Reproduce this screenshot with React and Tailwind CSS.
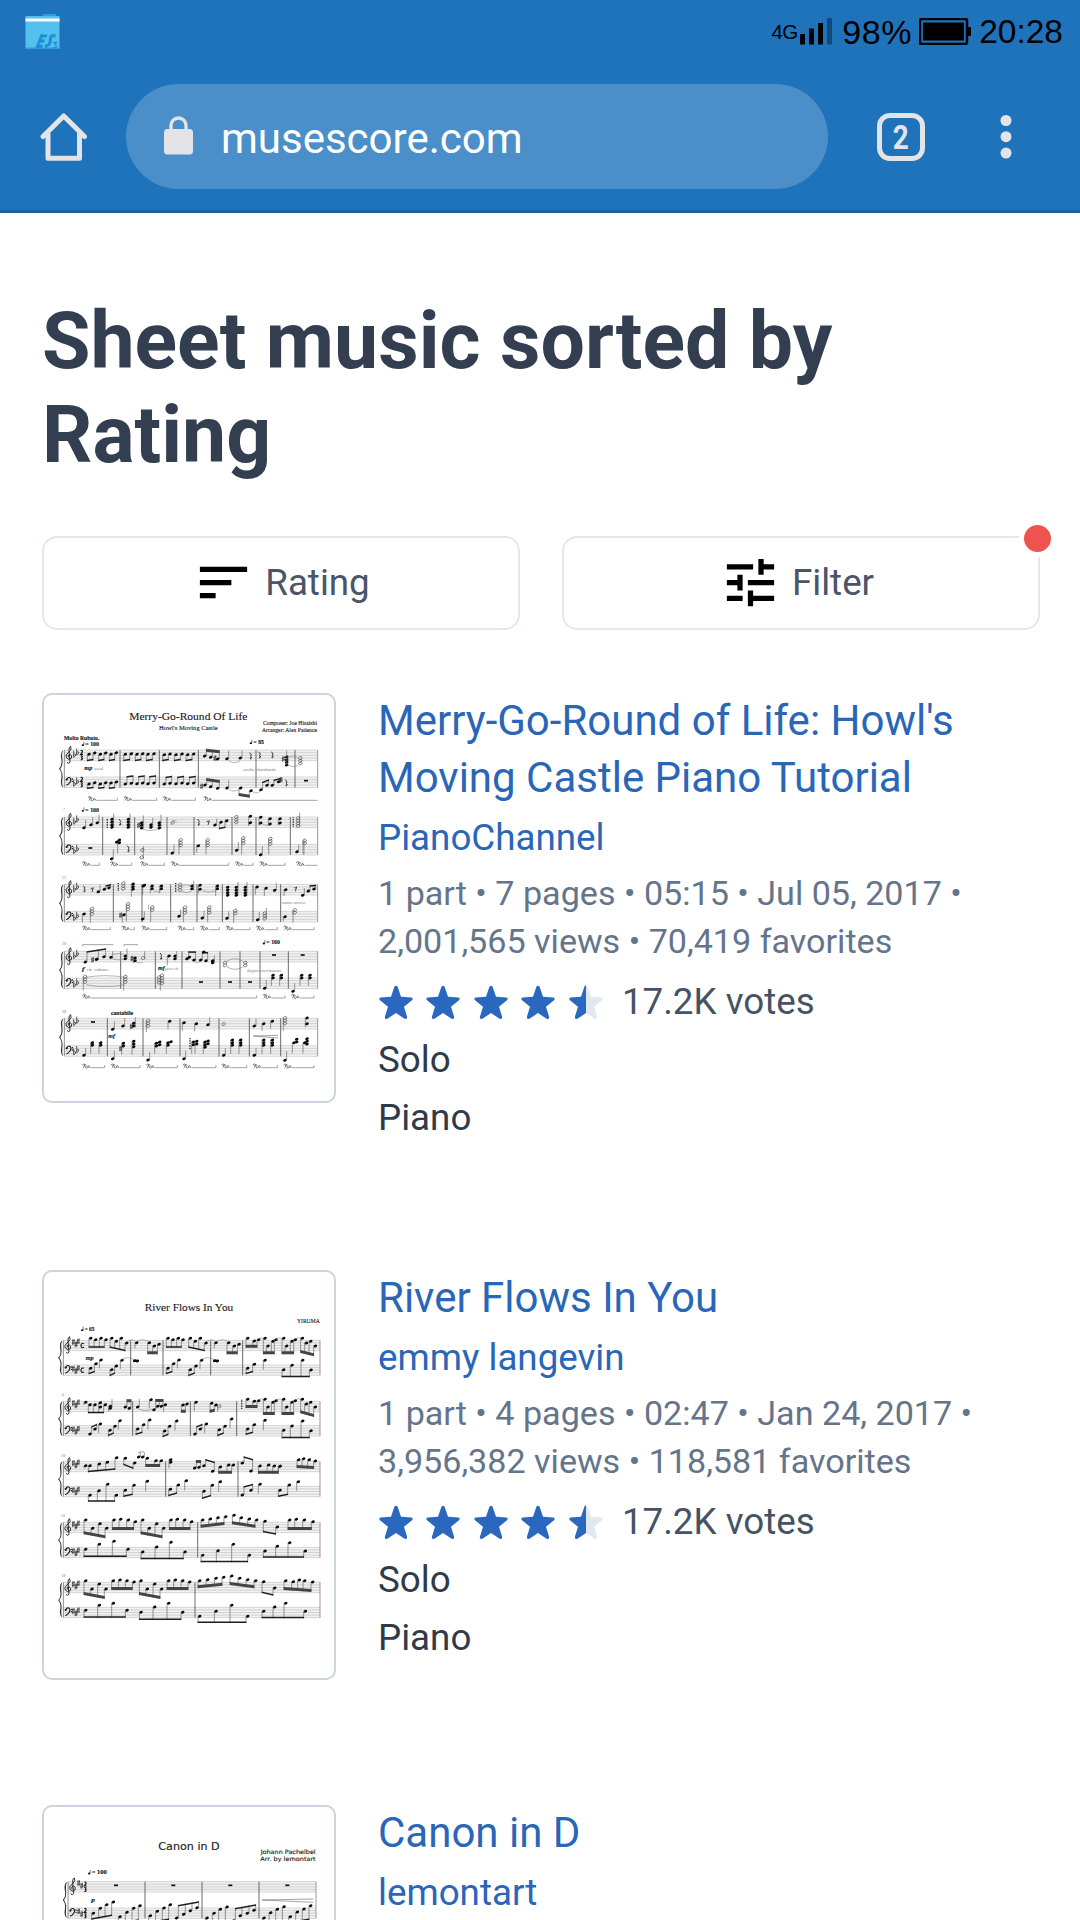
import { MdSort, MdTune } from 'react-icons/md';

/* ---------- engraved score previews ---------- */

const INK = '#1c1c1c';

function Head({ x, y, hollow }) {
  return (
    <ellipse
      cx={x} cy={y} rx="5.6" ry="4.1"
      transform={`rotate(-24 ${x} ${y})`}
      fill={hollow ? 'none' : '#0a0a0a'}
      stroke={hollow ? '#555' : 'none'}
      strokeWidth="2"
    />
  );
}

const pts = (s) => s.trim().split(/\s+/).map((p) => p.split(',').map(Number));

function Mark({ code }) {
  const kind = code[0];
  const body = code.slice(1).trim();
  if (kind === 'b') {
    const [notes, ends, n] = body.split('|');
    const heads = pts(notes);
    const [ya, yb] = ends.trim().split(' ').map(Number);
    const up = ya < heads[0][1];
    const dx = up ? 5 : -5;
    const xa = heads[0][0] + dx;
    const xb = heads[heads.length - 1][0] + dx;
    const at = (x) => ya + ((yb - ya) * (x - xa)) / (xb - xa || 1);
    const h = Number(n || 1) > 1 ? 9 : 4.5;
    const d = up ? h : -h;
    return (
      <g>
        {heads.map(([x, y], i) => (
          <g key={i}>
            <Head x={x} y={y} />
            <path d={`M${x + dx} ${y}V${at(x + dx)}`} stroke="#555" strokeWidth="1.8" />
          </g>
        ))}
        <path d={`M${xa - 1} ${ya}L${xb + 1} ${yb}v${d}L${xa - 1} ${ya + d}z`} fill={h > 5 ? '#444' : INK} />
      </g>
    );
  }
  if (kind === 'u') {
    const [x1, y, x2, h] = body.split(',').map(Number);
    return <path d={`M${x1} ${y}Q${(x1 + x2) / 2} ${y + h * 2} ${x2} ${y}`} fill="none" stroke="#777" strokeWidth="1.6" />;
  }
  if (kind === 'p') {
    const [x1, x2, y, open] = body.split(',').map(Number);
    return (
      <g>
        <path
          d={`M${x1 + 1} ${y - 6}q2 -6 6 -4q4 4 -1 8M${x1 + 3} ${y + 2}q5 -2 4 -9q5 -4 6 1q-3 4 -2 8q4 2 6 -3M${x1 + 22} ${y - 5}q-6 -1 -5 4q3 4 6 -2v4`}
          fill="none" stroke="#4a4a4a" strokeWidth="1.9"
        />
        <path d={`M${x1 + 26} ${y + 1}H${x2}${open ? '' : 'v-8'}`} fill="none" stroke="#6a6a6a" strokeWidth="1.8" />
      </g>
    );
  }
  const v = body.split(',').map(Number);
  if (kind === 's') {
    const up = v[2] < v[1];
    return (
      <g>
        <Head x={v[0]} y={v[1]} />
        <path d={`M${v[0] + (up ? 5 : -5)} ${v[1]}V${v[2]}`} stroke="#555" strokeWidth="1.8" />
      </g>
    );
  }
  if (kind === 'c' || kind === 'o') {
    const [x, y1, y2, stem] = v;
    const heads = [];
    for (let y = y1; y <= y2; y += 8) heads.push(y);
    return (
      <g>
        {heads.map((y) => <Head key={y} x={x} y={y} hollow={kind === 'o'} />)}
        {stem ? <path d={`M${x + (stem < y1 ? 5 : -5)} ${stem < y1 ? y2 : y1}V${stem}`} stroke="#555" strokeWidth="1.8" /> : null}
      </g>
    );
  }
  if (kind === 'r') return <path d={`M${v[0] - 2} ${v[1] - 9}l5 7q-5 3 1 9q-7 -2 -3 4`} fill="none" stroke={INK} strokeWidth="2.6" />;
  if (kind === 'e') return <path d={`M${v[0] - 4} ${v[1] - 3}q5 2 8 -2l-4 13`} fill="none" stroke={INK} strokeWidth="2.4" />;
  if (kind === 'w') return <rect x={v[0] - 6} y={v[1] - 2.5} width="12" height="5" fill="#111" />;
  if (kind === 'a') return <path d={`M${v[0]} ${v[1] - 8}v16M${v[0] + 4} ${v[1] - 9}v16M${v[0] - 3} ${v[1] - 2}l10 -3M${v[0] - 3} ${v[1] + 4}l10 -3`} fill="none" stroke={INK} strokeWidth="1.8" />;
  if (kind === 'z') {
    const [x, y1, y2] = v;
    return <path d={`M${x} ${y1}V${y2}`} stroke="#333" strokeWidth="4" strokeDasharray="3 2" />;
  }
  if (kind === 'l') return <path d={`M${v[0]} ${v[1]}L${v[2]} ${v[3]}`} stroke="#666" strokeWidth="1.8" />;
  return null;
}

function Staff({ x0, x1, y, h }) {
  return (
    <g>
      <rect x={x0} y={y} width={x1 - x0} height={h} fill="#f1f1f1" />
      {[0, 1, 2, 3, 4].map((i) => (
        <path key={i} d={`M${x0} ${y + (h * i) / 4}H${x1}`} stroke="#a9a9a9" strokeWidth="1.3" />
      ))}
    </g>
  );
}

function KeySig({ kind, x, y }) {
  if (kind === 'flat') {
    return (
      <g fill="none" stroke={INK} strokeWidth="2.1">
        <path d={`M${x} ${y}v20q7 -4 6 -9q-3 -3 -6 1`} />
        <path d={`M${x + 9} ${y - 7}v20q7 -4 6 -9q-3 -3 -6 1`} />
      </g>
    );
  }
  const offs = kind === 'sharp3' ? [[0, 2], [8, 9], [15, 0]] : [[2, 1], [11, 9]];
  return offs.map(([dx, dy]) => (
    <path
      key={dx}
      d={`M${x + dx} ${y + dy - 8}v17M${x + dx + 4} ${y + dy - 9}v17M${x + dx - 2} ${y + dy - 2}l8 -3M${x + dx - 2} ${y + dy + 5}l8 -3`}
      fill="none" stroke={INK} strokeWidth="1.9"
    />
  ));
}

function System({ x0, x1, t, b, h, bars, sig, time, marks }) {
  const end = b + h;
  const mid = (t + end) / 2;
  return (
    <g>
      <Staff x0={x0} x1={x1} y={t} h={h} />
      <Staff x0={x0} x1={x1} y={b} h={h} />
      <path d={`M${x0} ${t}V${end}`} stroke="#555" strokeWidth="2" />
      {bars.map((x) => <path key={x} d={`M${x} ${t}V${end}`} stroke="#555" strokeWidth="2.6" />)}
      <path d={`M${x1} ${t}V${end}`} stroke="#999" strokeWidth="3" />
      <path
        d={`M${x0 - 3} ${t}q-9 6 -7 22q5 24 -6 ${mid - t - 22}q11 10 6 ${end - mid - 22}q-2 16 7 22q-5 -10 -3 -24q3 -18 -6 ${-(end - mid - 24)}q9 -9 6 ${-(mid - t - 24)}q-2 -14 3 -24z`}
        fill="#333"
      />
      <path
        d={`M${x0 + 8} ${t + h + 5}q5 6 9 0L${x0 + 14} ${t + 2}q-1 -12 5 -13q5 8 -5 17q-13 9 -8 17q6 9 15 2q4 -9 -4 -12q-8 1 -5 9`}
        fill="none" stroke={INK} strokeWidth="2.7"
      />
      <g fill="none" stroke={INK} strokeWidth="3.4">
        <path d={`M${x0 + 7} ${b + 9}q2 -9 9 -7q7 4 1 14q-4 6 -11 9`} />
        <circle cx={x0 + 7} cy={b + 8} r="1.5" />
      </g>
      <circle cx={x0 + 24} cy={b + 6} r="2" /><circle cx={x0 + 24} cy={b + 13} r="2" />
      <KeySig kind={sig} x={x0 + 28} y={sig === 'flat' ? t + 2 : t + 3} />
      <KeySig kind={sig} x={x0 + 28} y={sig === 'flat' ? b + 8 : b + 9} />
      {time === 'n' && [t, b].map((y) => (
        <path key={y} d={`M${x0 + 49} ${y + 2}q6 -3 5 4l-5 7h7M${x0 + 49} ${y + 18}q8 -2 3 5q6 5 -3 7`} fill="none" stroke={INK} strokeWidth="3.6" />
      ))}
      {time === 'c' && [t, b].map((y) => (
        <path key={y} d={`M${x0 + 62} ${y + 10}q-8 -4 -9 6q1 9 9 5`} fill="none" stroke={INK} strokeWidth="3.4" />
      ))}
      {marks.map((m, i) => <Mark key={i} code={m} />)}
    </g>
  );
}

const merry = {
  x0: 85, x1: 845, h: 32, sig: 'flat',
  labels: [
    [457, 97, 34, 'm', 'Merry-Go-Round Of Life', 355],
    [457, 125, 21, 'm', "Howl's Moving Castle", 176],
    [843, 112, 19, 'e', 'Composer: Joe Hisaishi', 162],
    [843, 133, 19, 'e', 'Arranger: Alex Patience', 165],
    [84, 156, 17, 's', 'Molto Rubato.', 106, 'b'],
    [137, 174, 17, 's', '♩= 100', 52, 'b'],
    [641, 168, 17, 's', '♩= 85', 43, 'b'],
    [145, 245, 17, 's', 'mp', 24, 'i'],
    [175, 245, 12, 's', 'accel.', 30, 'g'],
    [622, 248, 12, 's', 'molto ritardando', 98, 'g'],
    [137, 371, 17, 's', '♩= 100', 52, 'b'],
    [82, 369, 10, 's', '7', 5, 'g'],
    [78, 573, 10, 's', '13', 12, 'g'],
    [738, 647, 12, 's', 'meno mosso', 70, 'g'],
    [78, 772, 10, 's', '20', 12, 'g'],
    [138, 848, 18, 's', 'f', 8, 'i'],
    [152, 849, 13, 's', 'rit.  rubato', 64, 'g'],
    [366, 845, 17, 's', 'mf', 20, 'i'],
    [387, 845, 12, 's', 'poco rit.', 42, 'g'],
    [680, 769, 17, 's', '♩= 160', 52, 'b'],
    [633, 853, 12, 's', 'doppio movimento', 102, 'g'],
    [78, 975, 10, 's', '30', 12, 'g'],
    [225, 980, 17, 's', 'cantabile', 66, 'b'],
    [217, 1050, 18, 's', 'mf', 20, 'i'],
  ],
  systems: [
    {
      t: 186, b: 267, time: 'n', bars: [252, 370, 487, 660, 777],
      marks: [
        'b 159,199 176,195|220 217', 'b 193,199 209,195|220 217', 'b 225,199 241,194|220 217',
        'b 268,199 286,197|220 217', 'b 303,199 320,197|220 217', 'b 336,199 354,197|220 217',
        'b 385,200 402,198|220 217', 'b 420,200 438,198|220 217', 'b 455,200 473,198|220 217',
        'b 506,204 524,208 545,213|182 187|2', 'a 535,211', 's 573,212,188', 'u 578,218,612,6', 's 613,210,188', 'r 643,203', 'r 670,200', 'r 708,200',
        'a 740,213', 'c 752,207,232,0', 'u 756,208,786,-4', 'u 756,232,786,4', 'o 793,210,232,0', 'l 752,187,752,232',
        'b 159,288 176,284|303 301', 'b 193,288 209,284|303 301', 'b 225,285 241,282|303 301',
        'b 268,288 286,286|264 262', 'b 303,287 320,285|264 262', 'b 336,287 354,285|264 262',
        'b 385,288 402,286|266 263', 'b 420,287 438,285|266 263', 'b 455,287 473,285|266 263',
        'a 495,295', 'b 507,291 524,296 545,301|270 276|2', 's 573,300,277', 'u 578,304,610,5', 'b 614,300 645,308|324 329|2', 'b 675,305 693,292|281 274', 'b 709,292 728,281|275 269', 'a 733,276', 'r 750,284', 'w 810,278', 'u 649,310,672,5',
        'p 155,244,336', 'p 263,362,336', 'p 380,478,336', 'p 502,845,336,1',
      ],
    },
    {
      t: 387, b: 469, bars: [200, 296, 393, 474, 588, 660, 763],
      marks: [
        's 144,419,395', 's 165,410,387', 's 184,404,380', 'z 214,392,420', 'c 228,394,420,376', 'r 251,402', 'c 277,394,420,376',
        'a 306,412', 'c 317,404,420,382', 'c 345,410,420,390', 'c 370,404,422,380', 'u 320,424,364,4', 'o 410,404,405,0', 'u 408,400,422,-3',
        'r 487,402', 'e 516,403', 's 537,411,392', 'b 555,403 572,398|424 420', 'o 601,387,410,0', 's 643,385,412', 's 643,404,414', 's 674,388,410', 's 674,405,412', 's 702,392,412', 's 702,408,414', 's 732,392,410', 's 732,405,412', 'u 680,408,700,4', 'z 772,388,418', 'o 786,390,416,374',
        'w 163,480', 's 227,512,484', 'c 250,456,466,496', 'c 242,462,462,0', 'r 276,482', 'o 319,486,487,0', 'o 317,508,514,474', 's 409,495,470', 'o 434,456,472,500', 's 487,473,494', 'o 515,456,472,500', 's 602,487,462', 'o 622,450,472,500', 's 674,500,474', 'o 703,452,472,500', 's 783,491,470', 'o 806,458,472,500', 'l 804,454,804,500',
        'p 138,190,531', 'p 222,287,531', 'p 312,385,531', 'p 404,578,531', 'p 597,651,531', 'p 670,747,531', 'p 780,845,531,1',
      ],
    },
    {
      t: 589, b: 670, bars: [232, 318, 404, 483, 559, 651, 734],
      marks: [
        'r 144,602', 'e 168,604', 's 187,611,590', 'b 205,604 219,599|592 588', 'z 247,585,610', 'o 262,586,606,0', 'c 291,588,610,626', 's 325,592,620', 'c 322,594,600,0', 'c 348,594,604,616', 'c 376,594,604,616', 'u 352,608,374,4', 'z 419,585,612', 'o 432,590,608,0', 'c 468,594,608,578', 'u 436,594,466,-4', 'u 436,610,466,4', 's 492,592,616', 'c 492,604,606,0', 'c 544,594,608,624', 'u 498,608,540,4', 'c 575,598,622,600', 'c 601,598,622,582', 'c 628,598,622,582', 's 663,597,620', 's 690,601,624', 's 716,607,585', 's 749,605,624', 'e 778,602', 's 800,622,600', 'b 817,609 834,603|592 590',
        's 144,678,704', 'o 168,662,678,704', 'a 252,682', 's 264,680,704', 'o 276,648,670,700', 's 320,693,670', 'o 349,658,672,702', 'l 338,650,338,664', 's 429,685,664', 'o 447,658,676,702', 's 499,690,668', 'o 520,658,676,702', 's 573,691,670', 'o 598,668,678,704', 's 665,695,672', 'o 686,676,692,660', 's 747,686,700', 'o 776,666,678,704',
        'p 138,223,724', 'p 256,295,724', 'p 316,392,724', 'p 425,473,724', 'p 492,550,724', 'p 568,642,724', 'p 660,724,724', 'p 742,834,724',
      ],
    },
    {
      t: 790, b: 870, bars: [254, 358, 438, 552, 612, 672, 757],
      marks: [
        'b 148,822 182,814 204,806|790 781', 'a 168,816', 'c 182,814,820,0', 'c 225,808,812,790', 'u 230,812,264,4', 'u 230,800,264,-4', 'l 140,775,140,770', 'l 140,770,232,770', 'l 264,775,264,770', 'l 264,770,306,770', 'c 268,804,812,782', 'a 286,812', 'c 297,810,818,826', 'o 321,810,814,790', 'u 300,822,320,3', 'r 374,804', 'c 399,804,810,832', 'c 417,804,812,790', 'b 453,812 474,816|790 790', 'c 460,808,814,0', 'u 476,820,494,4', 'b 494,816 510,818|792 792', 'c 503,792,796,0', 's 530,824,802', 'c 530,818,820,0', 'o 567,824,834,0', 'u 572,820,622,-8', 'u 572,836,622,8', 'o 628,824,834,0', 'w 714,801', 'w 800,801',
        'o 147,866,888,908', 'o 268,866,888,908', 'u 150,868,266,-5', 'u 150,890,266,6', 'o 378,862,886,908', 'o 369,868,886,0', 'w 495,882', 'w 582,882', 'w 642,882', 's 686,901,876', 'c 711,862,876,894', 'c 736,862,876,894', 's 771,910,886', 'c 797,862,876,894', 'c 822,862,876,894',
        'p 138,662,929', 'p 680,747,929', 'p 765,834,929',
      ],
    },
    {
      t: 991, b: 1073, bars: [214, 321, 432, 549, 640, 734],
      marks: [
        'w 171,1002', 's 230,1024,1000', 's 261,1014,990', 'a 284,1016', 'c 293,1006,1018,988', 'o 336,998,1016,1032', 's 401,1000,1024', 's 444,1004,1028', 's 481,1007,1030', 's 516,1010,988', 'o 563,1008,1009,0', 's 655,1014,992', 's 683,1007,1028', 's 709,1000,1022', 'o 747,990,1008,1028', 's 813,990,1012', 's 813,1007,1018', 'l 652,1044,726,1042', 'l 652,1044,726,1050',
        's 144,1102,1080', 'c 169,1064,1078,1098', 'c 194,1064,1078,1098', 's 230,1112,1088', 'a 252,1082', 'c 262,1066,1080,1100', 'c 293,1060,1082,1100', 's 336,1116,1092', 'c 361,1066,1076,1098', 'c 371,1062,1070,0', 'c 396,1064,1078,1098', 'c 405,1061,1068,0', 's 444,1112,1088', 'z 462,1050,1086', 'c 472,1062,1070,1098', 'c 482,1060,1068,1098', 'c 507,1062,1082,1098', 'c 516,1059,1068,0', 's 563,1102,1080', 'c 589,1056,1078,1098', 'c 614,1056,1078,1098', 's 655,1102,1080', 'c 683,1056,1078,1098', 'c 709,1056,1078,1098', 's 747,1117,1090', 'c 774,1064,1070,1096', 'c 782,1054,1066,0', 'c 806,1064,1070,1096', 'c 813,1052,1068,0',
        'p 138,206,1138', 'p 224,312,1138', 'p 330,424,1138', 'p 440,540,1138', 'p 556,632,1138', 'p 650,724,1138', 'p 742,834,1138',
      ],
    },
  ],
};

const river = {
  x0: 82, x1: 852, h: 31, sig: 'sharp3',
  labels: [
    [459, 138, 34, 'm', 'River Flows In You', 265],
    [851, 175, 19, 'e', 'YIRUMA', 68],
    [135, 198, 16, 's', '♩= 65', 40, 'b'],
    [149, 284, 17, 's', 'mp', 24, 'i'],
    [78, 392, 10, 's', '6', 6, 'g'],
    [76, 575, 10, 's', '10', 12, 'g'],
    [76, 756, 10, 's', '15', 12, 'g'],
    [76, 937, 10, 's', '18', 12, 'g'],
  ],
  systems: [
    {
      t: 226, b: 300, time: 'c', bars: [284, 381, 524, 620],
      marks: [
        'b 164,220 179,224 195,220 210,224|248 248', 'b 227,220 241,229 256,220 272,234|248 259', 'u 276,228,298,-4', 's 302,233,250', 'u 304,228,336,-4', 'b 340,233 355,243 369,238|268 268|2',
        'b 396,220 411,224 427,220 441,224|248 248', 'b 463,220 478,229 493,220 510,234|248 259', 'u 514,228,538,-4', 's 540,233,250', 'u 544,228,574,-4', 'b 578,233 595,243 609,238|268 268|2',
        'b 635,220 655,228 668,224|248 248|2', 'u 668,222,684,-4', 'b 687,220 696,243 711,229 720,224|268 268|2', 'u 720,224,742,-5', 'b 743,220 752,243 768,229 778,224|268 268|2', 'u 778,222,798,-4', 'b 799,220 811,234 824,229 838,243|264 274|2',
        'b 164,310 180,296|328 322', 's 195,285,310', 'b 227,314 241,303|334 326', 's 258,286,312', 'u 258,284,294,-6', 'w 300,287', 'c 296,287,287,0', 'c 304,288,288,0',
        'b 396,310 413,296|328 322', 's 429,285,310', 'b 463,314 480,303|334 326', 's 497,286,312', 'u 497,284,534,-6', 'w 540,287', 'c 536,287,287,0', 'c 544,288,288,0',
        'b 635,310 655,298|328 322', 's 687,286,314', 'b 743,314 768,301 800,286 825,315|337 337',
      ],
    },
    {
      t: 409, b: 482, bars: [290, 463, 602],
      marks: [
        's 149,412,420', 'b 162,419 177,419 193,413 208,419|445 445', 'c 193,426,426,0', 's 223,424,440', 's 223,430,402', 'b 268,426 280,430|403 403|2', 's 305,426,402', 'u 308,432,350,5', 'b 354,434 365,424 376,424|402 402|2', 's 388,419,440', 's 345,404,430', 'b 441,420 453,417|443 443|2', 's 480,412,438', 'b 527,415 540,420|443 440|2', 'o 550,424,424,440', 'z 617,404,432',
        'b 635,403 655,409 668,407|429 429|2', 'u 668,405,684,-4', 'b 687,403 696,426 711,412 720,407|450 450|2', 'u 720,407,742,-5', 'b 743,403 752,426 768,412 778,407|450 450|2', 'u 778,405,798,-4', 'b 799,403 811,417 824,412 838,426|445 456|2',
        'b 162,507 177,492|484 476', 's 193,477,504', 'b 222,496 237,484|514 506', 's 252,467,494', 'b 305,492 323,479|510 504', 's 341,465,494', 'b 386,498 401,484|517 510', 's 422,468,496', 'b 477,507 493,492|484 476', 's 511,477,504', 'b 550,494 567,484|514 506', 's 587,462,490', 'b 635,492 655,479|510 504', 's 687,466,496', 'b 743,496 768,483 800,468 825,497|520 520',
      ],
    },
    {
      t: 589, b: 664, bars: [389, 606],
      marks: [
        's 149,602,610', 'b 162,602 190,597 214,592 242,578|622 614', 'b 268,580 296,594|600 612', 's 308,576,562', 's 320,576,562', 'l 306,562,324,560', 'b 334,580 360,587 376,587|606 606|2', 's 404,584,610', 'c 404,592,594,0',
        'b 476,609 489,607|585 585|2', 'b 504,602 530,619|582 590', 'b 553,606 578,600 592,600|626 626|2', 'b 619,594 645,618|574 582', 'b 672,603 698,600 715,603 732,604|626 626|2', 's 732,604,624', 'b 788,584 803,581 820,584 838,588|609 612|2',
        'b 162,691 189,677 215,658 241,691|710 710', 'b 268,676 294,661|696 690', 's 334,649,678', 'b 403,673 427,660|694 686', 's 451,647,676', 'b 504,679 529,661|702 694', 's 553,650,680', 'b 619,690 645,676|664 656', 's 672,658,686', 'b 732,676 760,660|696 690', 's 787,650,678',
      ],
    },
    {
      t: 772, b: 847, bars: [485],
      marks: [
        'b 149,765 170,790 192,776 212,790|808 820|2', 'b 234,765 254,763 277,765 298,770|795 795|2', 'b 320,765 340,790 362,776 383,790|808 820|2', 'b 405,765 424,763 446,765 467,770|795 795|2',
        'b 500,765 523,762 546,758 569,755|788 780|2', 'b 594,751 616,758 640,762 662,765|778 788|2', 'b 687,769 724,786|802 809', 'b 761,765 781,763 805,765 831,770|795 795|2',
        'b 149,853 190,838 234,829 276,853|876 876', 'b 320,861 362,846 405,832 447,861|883 883', 'b 500,871 546,857 592,838 640,871|892 892', 'b 687,858 724,844 761,833 808,858|878 878',
      ],
    },
    {
      t: 952, b: 1027, bars: [477],
      marks: [
        'b 149,947 168,972 190,957 210,972|990 1002|2', 'b 232,947 252,945 273,947 294,951|975 975|2', 'b 315,947 334,972 356,957 377,972|990 1002|2', 'b 398,947 418,945 440,947 461,951|975 975|2',
        'b 491,947 515,944 540,940 563,937|970 962|2', 'b 587,933 611,940 635,944 659,947|960 970|2', 'b 683,950 716,969|984 992', 'b 749,947 772,950 790,945 806,947 830,951|975 981|2',
        'b 149,1036 190,1021 232,1015 273,1036|1058 1058', 'b 315,1042 356,1026 398,1015 440,1042|1065 1065', 'b 491,1054 540,1039 587,1021 635,1054|1074 1074', 'b 683,1039 716,1026 749,1015 808,1039|1060 1060',
      ],
    },
  ],
};

const canon = {
  x0: 96, x1: 840, h: 31, sig: 'sharp2', sans: true,
  labels: [
    [459, 149, 33, 'm', 'Canon in D', 184],
    [839, 161, 18, 'e', 'Johann Pachelbel', 165],
    [839, 183, 18, 'e', 'Arr. by lemontart', 166],
    [156, 223, 16, 's', '♩= 100', 56, 'b'],
    [166, 307, 18, 's', 'p', 11, 'i'],
  ],
  systems: [
    {
      t: 245, b: 324, time: 'n', bars: [327, 498, 669],
      marks: [
        'w 240,256', 'w 412,256', 'w 583,256', 'w 754,256',
        'b 172,340 193,325 212,314 232,306|359 348', 'b 252,350 273,337 293,325 312,317|372 362',
        'b 343,347 364,334 384,324 403,314|370 360', 'b 422,354 443,343 463,332 483,323|315 304',
        'b 513,354 534,340 553,328 573,321|374 364', 'b 593,362 613,347 634,340 654,331|324 313',
        'b 684,354 704,338 724,328 744,320|374 364', 'b 763,350 784,336 804,327 824,317|370 360',
        'l 678,300,832,297', 'l 678,300,832,307',
      ],
    },
  ],
};

const anchors = { m: 'middle', e: 'end', s: 'start' };

function Label({ data, sans }) {
  const [x, y, size, anchor, text, width, style] = data;
  const face = sans && !style ? "font-['DejaVu_Sans',sans-serif]" : "font-['Liberation_Serif','DejaVu_Serif',serif]";
  const tempo = text[0] === '♩';
  const inset = tempo ? 11 : 0;
  return (
    <g>
      {tempo && (
        <g>
          <ellipse cx={x + 3.5} cy={y - 2.5} rx="3.6" ry="2.8" fill="#111" />
          <path d={`M${x + 6.5} ${y - 3}v-10`} stroke="#222" strokeWidth="1.8" />
        </g>
      )}
      <text
        x={x + inset} y={y} fontSize={size} textAnchor={anchors[anchor]} textLength={width - inset} lengthAdjust="spacingAndGlyphs"
        fontWeight={style === 'b' || style === 'i' ? 'bold' : 'normal'}
        fontStyle={style === 'i' || style === 'g' ? 'italic' : 'normal'}
        fill={style === 'g' ? '#777' : '#1a1a1a'}
        stroke={style === 'g' ? 'none' : '#1a1a1a'}
        strokeWidth="0.4"
        className={face}
      >
        {tempo ? text.slice(1) : text}
      </text>
    </g>
  );
}

function ScorePreview({ score }) {
  return (
    <div className="h-[410px] w-[294px] shrink-0 overflow-hidden rounded-[10px] border-2 border-[#cbd5e0] bg-white">
      <svg viewBox="24 21 870 1218" className="block h-[406px] w-[290px]">
        {score.systems.map((s) => (
          <System key={s.t} x0={score.x0} x1={score.x1} h={score.h} sig={score.sig} {...s} />
        ))}
        {score.labels.map((l, i) => <Label key={i} data={l} sans={score.sans} />)}
      </svg>
    </div>
  );
}

/* ---------- rating ---------- */

const STAR = 'M15.400 1.800Q17 -.5 18.600 1.800L22 11.800 32.400 12.400Q34.600 13.200 33 15.200L25 21.800 28.200 32Q28.200 34.700 25.600 33.800L17 28 8.400 33.800Q5.800 34.700 5.800 32L9 21.800 1 15.200Q-.6 13.200 1.600 12.400L12 11.800z';
const HALF_STAR = 'M17 .1V28L8.400 33.800Q5.800 34.700 5.800 32L9 21.800 1 15.200Q-.6 13.200 1.600 12.400L12 11.800 15.400 1.800Q16.200 .6 17 .1z';

function Star({ half }) {
  return (
    <svg viewBox="0 0 34 35" className="h-[35px] w-[34px]">
      <path d={STAR} fill={half ? '#e2e8f0' : '#2a68bf'} />
      {half && <path d={HALF_STAR} fill="#2a68bf" />}
    </svg>
  );
}

function ScoreItem({ score, title, author, meta }) {
  return (
    <article className="flex items-start gap-[42px] pb-[125px]">
      <ScorePreview score={score} />
      <div className="-mb-[2px] min-w-0 flex-1 whitespace-nowrap text-[36.75px] leading-[58px] text-[#2f3b4b]">
        <h2 className="-mt-px text-[42px] leading-[57px] text-[#2a66b8]">
          {title.map((line) => <span key={line} className="block">{line}</span>)}
        </h2>
        <p className="mt-[3px] text-[#2a66b8]">{author}</p>
        {meta && (
          <>
            <div className="mt-[2px] text-[34.125px] leading-[48px] text-[#64748b]">
              {meta.map((line) => <p key={line}>{line}</p>)}
            </div>
            <div className="mt-[8px] flex h-[58px] items-center">
              <div className="flex gap-[13.6px] pl-[0.5px]">
                <Star /><Star /><Star /><Star /><Star half />
              </div>
              <span className="ml-[19px] text-[#465365]">17.2K votes</span>
            </div>
            <p>Solo</p>
            <p>Piano</p>
          </>
        )}
      </div>
    </article>
  );
}

/* ---------- browser chrome ---------- */

function StatusBar() {
  return (
    <div className="flex h-[64px] items-start justify-between pl-[25px] pr-[17px] text-black">
      <svg viewBox="0 0 36 37" className="mt-[13px] h-[37px] w-[36px]">
        <rect x="18" y="1" width="13" height="5" rx="1" fill="#1fa4e4" />
        <rect x="0.5" y="3" width="34" height="33" fill="#55c0ee" />
        <rect x="0.5" y="5.5" width="34" height="3" fill="#fff" />
        <rect x="0.5" y="34.5" width="34" height="1.5" fill="#2d9bd8" />
        <g fill="#1e90d8">
          <path d="M15.500 21.500h7l-1 3h-7zM13.500 26.500h6.500l-1 3h-6.500zM11.500 31.500h6.500l-1 3.500h-6.500z" />
          <path d="M15.500 21.500h3l-5 13.500h-3z" />
        </g>
        <path d="M30.500 22.800q-5 -.8 -5 2.500t-.8 5.200t-4.700 3" fill="none" stroke="#1e90d8" strokeWidth="3.200" />
        <path d="M28 29.500h3.500l-1.500 2q2 1 1 2.500t-3 .5" fill="none" stroke="#1e90d8" strokeWidth="1.300" />
      </svg>
      <div className="flex items-start font-['Liberation_Sans',sans-serif]">
        <span className="mt-[19.500px] text-[20.500px] leading-[24px] tracking-[-0.5px]">4G</span>
        <svg viewBox="0 0 32 27" className="ml-[2px] mt-[18px] h-[27px] w-[32px]">
          <path d="M0 16h5v10.500h-5zM9 10.500h5v16h-5zM18 5h5v21.500h-5z" />
          <path d="M27 0h5v26.500h-5z" fill="#124a80" />
        </svg>
        <span className="ml-[10.500px] mt-[12px] text-[34px] leading-[40px] tracking-[0.6px]">98%</span>
        <svg viewBox="0 0 52 27" className="ml-[7px] mt-[18px] h-[27px] w-[52px]">
          <rect x="1" y="1" width="47" height="25" rx="1.500" fill="none" stroke="#000" strokeWidth="2.500" />
          <rect x="4" y="4.500" width="41" height="18" />
          <rect x="48.500" y="9" width="3.500" height="9" rx="1" />
        </svg>
        <span className="ml-[8px] mt-[12px] text-[33.500px] leading-[40px]">20:28</span>
      </div>
    </div>
  );
}

function Toolbar() {
  return (
    <div className="flex items-start pt-[20px]">
      <svg viewBox="0 0 48 48" className="ml-[39.500px] mt-[29px] h-[48px] w-[48px]" fill="none" stroke="#e3e4e8" strokeWidth="5" strokeLinejoin="round" strokeLinecap="round">
        <path d="M3 23.500 23.700 3 44.500 23.500M8 21V45.300H39.500V21" />
      </svg>
      <div className="ml-[38.500px] flex h-[105px] w-[702px] items-center rounded-full bg-[#4a8fca] pl-[38px]">
        <svg viewBox="0 0 29 39" className="mb-[3px] h-[39px] w-[29px]">
          <path d="M7 15V9.500a7.500 7.500 0 0 1 15 0V15" fill="none" stroke="#e3e4e8" strokeWidth="3.300" />
          <rect x="0" y="13" width="29" height="25.500" rx="3.500" fill="#e3e4e8" />
        </svg>
        <span className="ml-[28px] mt-[4px] text-[42px] leading-[50px] text-white">musescore.com</span>
      </div>
      <div className="ml-[49px] mt-[29px] flex h-[48px] w-[48px] items-center justify-center rounded-[13px] border-[5px] border-[#e3e4e8] font-['Roboto',sans-serif] text-[34px] font-bold leading-none text-[#e3e4e8]">
        <span className="-mt-px inline-block scale-x-[0.82]">2</span>
      </div>
      <svg viewBox="0 0 12 46" className="ml-[75px] mt-[30px] h-[46px] w-[12px]" fill="#e3e4e8">
        <circle cx="6" cy="6.500" r="5.500" />
        <circle cx="6" cy="22.700" r="5.500" />
        <circle cx="6" cy="39" r="5.500" />
      </svg>
    </div>
  );
}

function ControlButton({ icon: Icon, children, dot }) {
  return (
    <button className="relative h-[94px] rounded-[15px] border-2 border-[#e2e8f0] text-[36.75px] text-[#4a5568]">
      <span className={dot ? '-ml-[9px] flex items-center justify-center gap-[10px]' : 'flex items-center justify-center gap-[10px]'}>
        <Icon className="-mt-[2px] h-[63px] w-[63px] text-black" />
        <span>{children}</span>
      </span>
      {dot && <span className="absolute -right-[18px] -top-[18px] h-[37px] w-[37px] rounded-full border-5 border-white bg-[#ef5350]" />}
    </button>
  );
}

export default function App() {
  return (
    <div className="h-[1920px] w-[1080px] overflow-hidden bg-white font-['Roboto',sans-serif]">
      <header className="h-[213px] border-b-[3px] border-[#1b62a3] bg-[#1f73bb]">
        <StatusBar />
        <Toolbar />
      </header>
      <main className="ml-[42px] w-[998px] pt-[81px]">
        <h1 className="w-[900px] text-[78.75px] font-bold leading-[94px] text-[#333f50]">Sheet music sorted by Rating</h1>
        <div className="mt-[54px] grid grid-cols-2 gap-[42px]">
          <ControlButton icon={MdSort}>Rating</ControlButton>
          <ControlButton icon={MdTune} dot>Filter</ControlButton>
        </div>
        <section className="mt-[63px]">
          <ScoreItem
            score={merry}
            title={["Merry-Go-Round of Life: Howl's", 'Moving Castle Piano Tutorial']}
            author="PianoChannel"
            meta={['1 part • 7 pages • 05:15 • Jul 05, 2017 •', '2,001,565 views • 70,419 favorites']}
          />
          <ScoreItem
            score={river}
            title={['River Flows In You']}
            author="emmy langevin"
            meta={['1 part • 4 pages • 02:47 • Jan 24, 2017 •', '3,956,382 views • 118,581 favorites']}
          />
          <ScoreItem score={canon} title={['Canon in D']} author="lemontart" />
        </section>
      </main>
    </div>
  );
}
